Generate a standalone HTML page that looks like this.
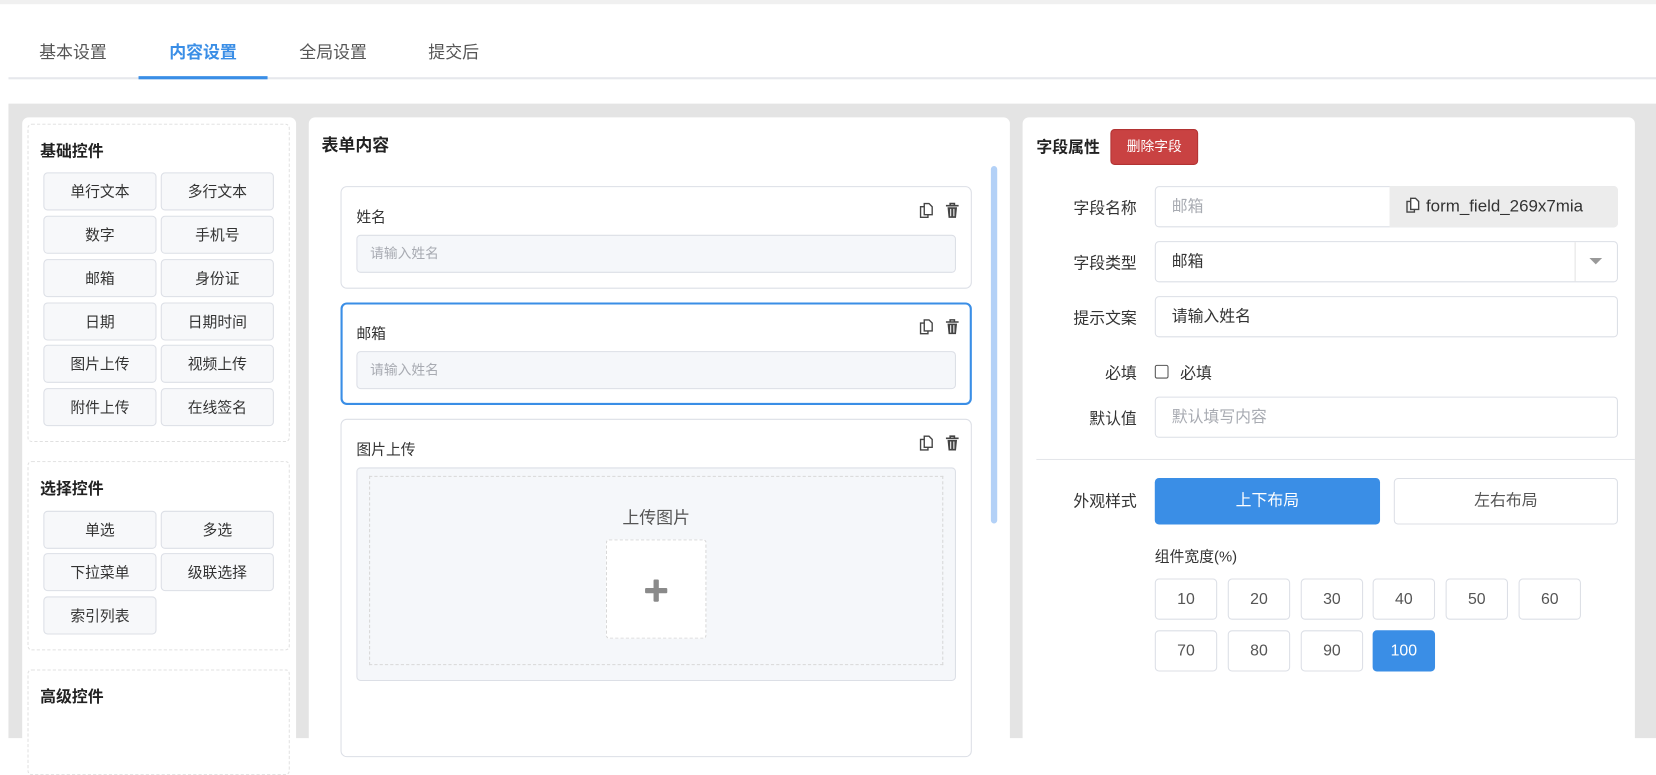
<!DOCTYPE html>
<html><head><meta charset="utf-8"><style>
*{box-sizing:border-box;margin:0;padding:0}
html,body{width:1656px;height:692px;overflow:hidden;background:#fff}
body{font-family:"Liberation Sans","Noto Sans CJK SC",sans-serif;color:#333}
#s{position:absolute;left:0;top:0;width:1566px;height:654px;transform:scale(1.0575);transform-origin:0 0}
.a{position:absolute}
.tab{position:absolute;top:36px;font-size:16px;color:#555}
.grey{background:#e4e4e4}
.card{position:absolute;background:#fff;border-radius:6px}
.grp{position:absolute;border:1px dashed #e0e0e0;border-radius:4px}
.gt{position:absolute;font-size:15px;font-weight:bold;color:#222}
.b{position:absolute;width:107px;height:36px;background:#f7f8fa;border:1px solid #dcdfe6;border-radius:4px;font-size:14px;color:#333;text-align:center;line-height:34px}
.fc{position:absolute;left:322px;width:597px;border:1px solid #dcdfe6;border-radius:6px;background:#fff}
.fl{position:absolute;left:14px;font-size:14px;color:#333}
.fi{position:absolute;left:14px;width:567px;height:36px;background:#f5f7fa;border:1px solid #dcdfe6;border-radius:4px;font-size:13px;color:#a8abb2;line-height:34px;padding-left:12px}
.ic{position:absolute;top:14px}
.lb{position:absolute;width:100px;left:975px;text-align:right;font-size:15px;color:#333}
.in{position:absolute;left:1092px;width:438px;height:39px;border:1px solid #dcdfe6;border-radius:4px;font-size:15px;line-height:37px;padding-left:15px;color:#333;background:#fff}
.w{position:absolute;width:59px;height:39px;border:1px solid #dcdfe6;border-radius:4px;text-align:center;line-height:37px;font-size:15px;color:#555;background:#fff}
</style></head><body><div id="s">
<div class="a" style="left:0;top:0;width:1566px;height:4px;background:#f0f0f0"></div>
<div class="tab" style="left:37px">基本设置</div>
<div class="tab" style="left:160px;color:#3a8ee6;font-weight:bold">内容设置</div>
<div class="tab" style="left:283px">全局设置</div>
<div class="tab" style="left:405px">提交后</div>
<div class="a" style="left:8px;top:73px;width:1558px;height:2px;background:#e6e8ec"></div>
<div class="a" style="left:131px;top:72px;width:122px;height:3px;background:#3a8ee6"></div>
<div class="a grey" style="left:8px;top:98px;width:1558px;height:600px"></div>

<div class="card" style="left:21px;top:111px;width:259px;height:600px">
 <div class="grp" style="left:5px;top:6px;width:248px;height:301px"></div>
 <div class="gt" style="left:17px;top:21px">基础控件</div>
 <div class="b" style="left:20px;top:52px">单行文本</div><div class="b" style="left:131px;top:52px">多行文本</div>
 <div class="b" style="left:20px;top:93px">数字</div><div class="b" style="left:131px;top:93px">手机号</div>
 <div class="b" style="left:20px;top:134px">邮箱</div><div class="b" style="left:131px;top:134px">身份证</div>
 <div class="b" style="left:20px;top:175px">日期</div><div class="b" style="left:131px;top:175px">日期时间</div>
 <div class="b" style="left:20px;top:215px">图片上传</div><div class="b" style="left:131px;top:215px">视频上传</div>
 <div class="b" style="left:20px;top:256px">附件上传</div><div class="b" style="left:131px;top:256px">在线签名</div>
 <div class="grp" style="left:5px;top:325px;width:248px;height:179px"></div>
 <div class="gt" style="left:17px;top:340px">选择控件</div>
 <div class="b" style="left:20px;top:372px">单选</div><div class="b" style="left:131px;top:372px">多选</div>
 <div class="b" style="left:20px;top:412px">下拉菜单</div><div class="b" style="left:131px;top:412px">级联选择</div>
 <div class="b" style="left:20px;top:453px">索引列表</div>
 <div class="grp" style="left:5px;top:522px;width:248px;height:100px"></div>
 <div class="gt" style="left:17px;top:537px">高级控件</div>
</div>

<div class="card" style="left:292px;top:111px;width:663px;height:600px">
 <div class="gt" style="left:12px;top:13px;font-size:16px">表单内容</div>
 <div class="a" style="left:645px;top:46px;width:6px;height:338px;background:#b3d1f7;border-radius:3px"></div>
</div>
<svg width="0" height="0" style="position:absolute"><defs>
<g id="cp"><path d="M6 1.5h4.5l3 3v7.5H6z" fill="#fff" stroke="#444" stroke-width="1.3"/><path d="M6 4.5H2.5v10h7V12" fill="none" stroke="#444" stroke-width="1.3"/></g>
<g id="tr"><path d="M1.5 3.5h12M5.5 3.5V1.5h4v2" fill="none" stroke="#444" stroke-width="1.5"/><path d="M3 5h9l-1 10H4z" fill="#444"/><path d="M6 6.5v7M9 6.5v7" stroke="#fff" stroke-width="1"/></g>
</defs></svg>
<div class="fc" style="top:176px;height:97px">
 <div class="fl" style="top:18px">姓名</div>
 <svg class="ic" style="left:545px" width="16" height="16"><use href="#cp"/></svg>
 <svg class="ic" style="left:570px" width="15" height="16"><use href="#tr"/></svg>
 <div class="fi" style="top:45px">请输入姓名</div>
</div>
<div class="fc" style="top:286px;height:97px;border:2px solid #3a8ee6">
 <div class="fl" style="top:17px;left:13px">邮箱</div>
 <svg class="ic" style="left:544px;top:13px" width="16" height="16"><use href="#cp"/></svg>
 <svg class="ic" style="left:569px;top:13px" width="15" height="16"><use href="#tr"/></svg>
 <div class="fi" style="top:44px;left:13px">请输入姓名</div>
</div>
<div class="fc" style="top:396px;height:320px">
 <div class="fl" style="top:18px">图片上传</div>
 <svg class="ic" style="left:545px" width="16" height="16"><use href="#cp"/></svg>
 <svg class="ic" style="left:570px" width="15" height="16"><use href="#tr"/></svg>
 <div class="a" style="left:14px;top:45px;width:567px;height:202px;background:#f5f7fa;border:1px solid #dcdfe6;border-radius:4px">
  <div class="a" style="left:11px;top:7px;width:543px;height:179px;border:1px dashed #d8d8d8"></div>
  <div class="a" style="left:0;width:100%;top:33px;text-align:center;font-size:16px;color:#555">上传图片</div>
  <div class="a" style="left:235px;top:67px;width:95px;height:94px;background:#fff;border:1px dashed #d8d8d8;border-radius:3px">
   <div class="a" style="left:36px;top:45px;width:21px;height:5px;background:#8a8a8a;border-radius:1px"></div>
   <div class="a" style="left:44px;top:37px;width:5px;height:21px;background:#8a8a8a;border-radius:1px"></div>
  </div>
 </div>
</div>

<div class="card" style="left:967px;top:111px;width:579px;height:600px"></div>
<div class="gt" style="left:980px;top:128px">字段属性</div>
<div class="a" style="left:1050px;top:122px;width:83px;height:34px;background:#c94242;border:1px solid #b23333;border-radius:4px;color:#fff;font-size:13px;text-align:center;line-height:32px">删除字段</div>
<div class="lb" style="top:186px">字段名称</div>
<div class="in" style="top:176px;color:#a8abb2">邮箱</div>
<div class="a" style="left:1314px;top:176px;width:216px;height:39px;background:#ececec;border-radius:0 4px 4px 0;font-size:16px;line-height:39px;padding-left:14px;color:#333"><svg width="16" height="16" style="vertical-align:-2px"><use href="#cp"/></svg> form_field_269x7mia</div>
<div class="lb" style="top:238px">字段类型</div>
<div class="in" style="top:228px">邮箱</div>
<div class="a" style="left:1489px;top:229px;width:1px;height:37px;background:#e4e4e4"></div>
<div class="a" style="left:1503px;top:244px;width:0;height:0;border-left:6px solid transparent;border-right:6px solid transparent;border-top:6px solid #999"></div>
<div class="lb" style="top:290px">提示文案</div>
<div class="in" style="top:280px">请输入姓名</div>
<div class="lb" style="top:342px">必填</div>
<div class="a" style="left:1092px;top:345px;width:13px;height:13px;border:1px solid #555;border-radius:2px"></div>
<div class="a" style="left:1116px;top:342px;font-size:15px">必填</div>
<div class="lb" style="top:385px">默认值</div>
<div class="in" style="top:375px;color:#a8abb2">默认填写内容</div>
<div class="a" style="left:980px;top:434px;width:566px;height:1px;background:#e4e6ea"></div>
<div class="lb" style="top:463px">外观样式</div>
<div class="a" style="left:1092px;top:452px;width:213px;height:44px;background:#3a8ee6;border-radius:4px;color:#fff;text-align:center;line-height:44px;font-size:15px">上下布局</div>
<div class="a" style="left:1318px;top:452px;width:212px;height:44px;border:1px solid #dcdfe6;border-radius:4px;color:#555;text-align:center;line-height:42px;font-size:15px">左右布局</div>
<div class="a" style="left:1092px;top:516px;font-size:14px;color:#333">组件宽度(%)</div>
<div class="w" style="left:1092px;top:547px">10</div><div class="w" style="left:1161px;top:547px">20</div><div class="w" style="left:1230px;top:547px">30</div><div class="w" style="left:1298px;top:547px">40</div><div class="w" style="left:1367px;top:547px">50</div><div class="w" style="left:1436px;top:547px">60</div>
<div class="w" style="left:1092px;top:596px">70</div><div class="w" style="left:1161px;top:596px">80</div><div class="w" style="left:1230px;top:596px">90</div><div class="w" style="left:1298px;top:596px;background:#3a8ee6;border-color:#3a8ee6;color:#fff">100</div>
</div></body></html>
